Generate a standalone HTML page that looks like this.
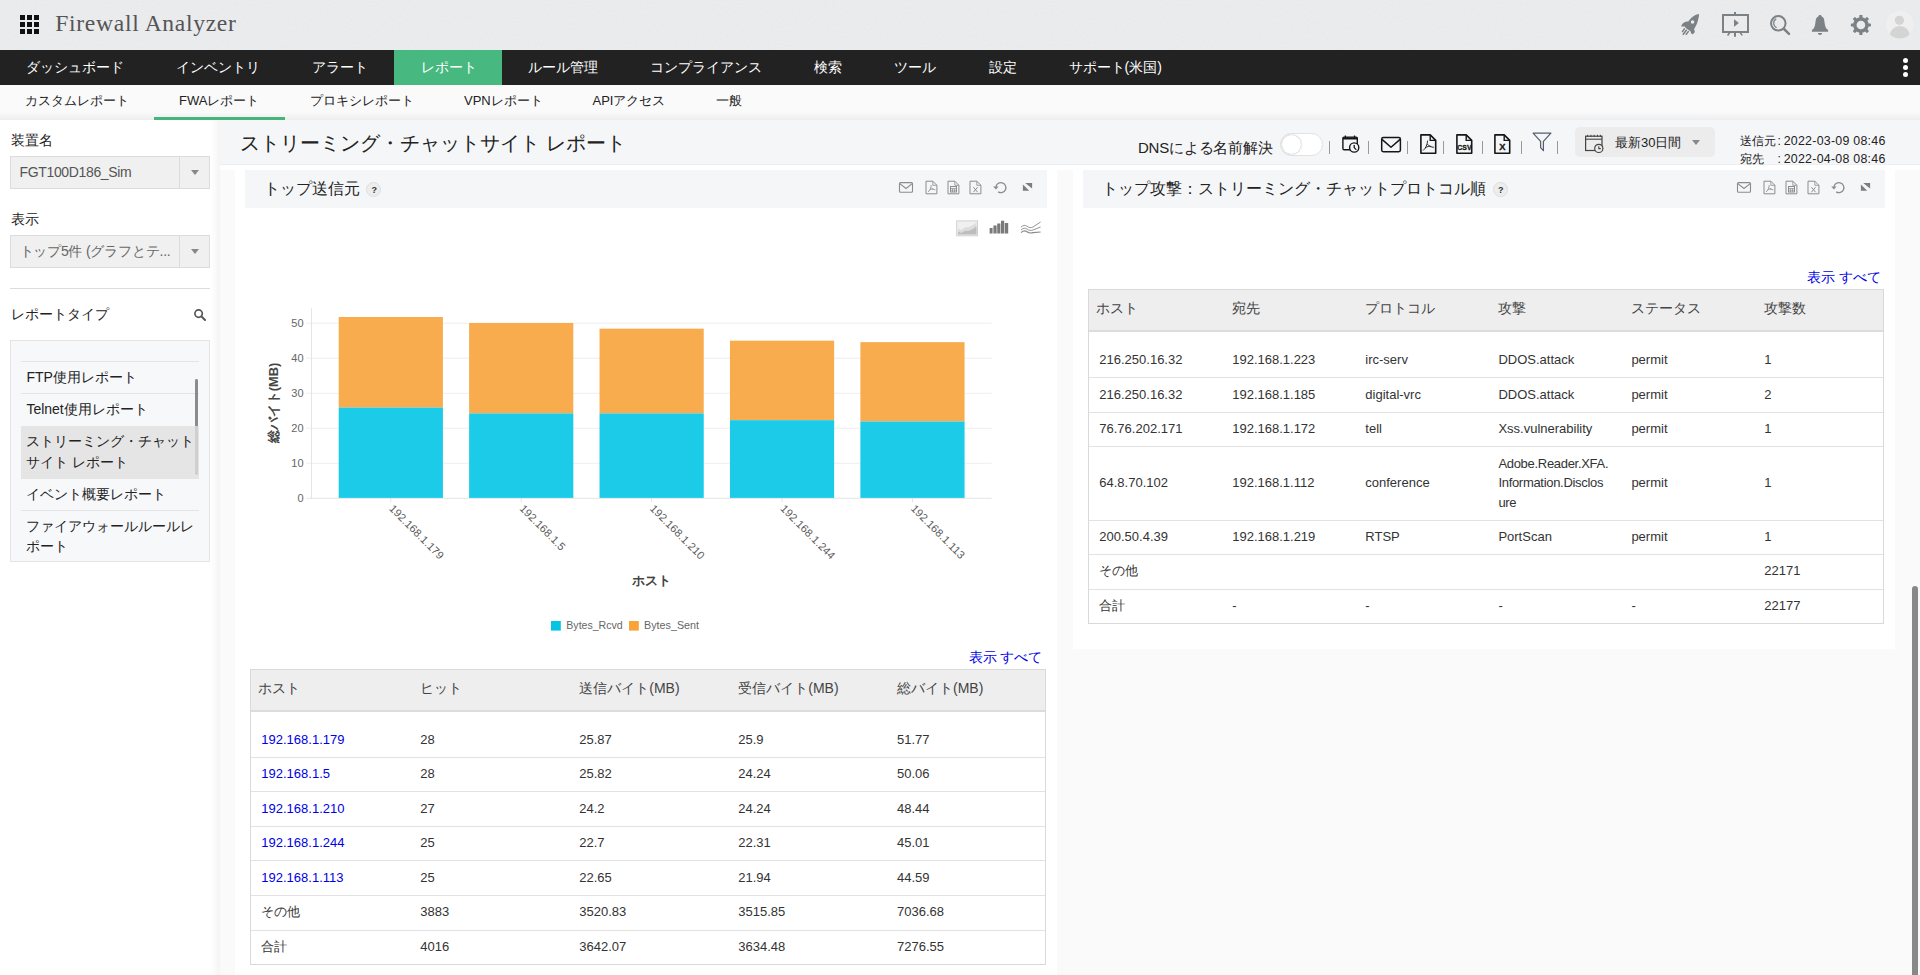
<!DOCTYPE html><html lang="ja"><head><meta charset="utf-8"><title>Firewall Analyzer</title><style>
*{box-sizing:border-box}
html,body{margin:0;padding:0}
body{width:1920px;height:975px;overflow:hidden;position:relative;background:#fafafa;font-family:"Liberation Sans",sans-serif;font-size:14px;color:#222}
.t{position:absolute;white-space:nowrap}
.r{position:absolute}
svg{position:absolute;overflow:visible}
a{color:#0000e6;text-decoration:none}
</style></head><body>
<div class="r" style="left:0px;top:0px;width:1920px;height:50px;background:#e9eaec;"></div>
<svg style="left:0;top:0" width="1920" height="50"><filter id="nz" x="0" y="0" width="100%" height="100%"><feTurbulence type="fractalNoise" baseFrequency="0.55" numOctaves="2" seed="7"/><feColorMatrix type="matrix" values="0 0 0 0 1  0 0 0 0 1  0 0 0 0 1  0.9 0 0 0 -0.33"/></filter><rect width="1920" height="50" filter="url(#nz)" opacity="0.35"/></svg>
<div class="r" style="left:20px;top:15px;width:5px;height:5px;background:#111;"></div>
<div class="r" style="left:20px;top:22px;width:5px;height:5px;background:#111;"></div>
<div class="r" style="left:20px;top:29px;width:5px;height:5px;background:#111;"></div>
<div class="r" style="left:27px;top:15px;width:5px;height:5px;background:#111;"></div>
<div class="r" style="left:27px;top:22px;width:5px;height:5px;background:#111;"></div>
<div class="r" style="left:27px;top:29px;width:5px;height:5px;background:#111;"></div>
<div class="r" style="left:34px;top:15px;width:5px;height:5px;background:#111;"></div>
<div class="r" style="left:34px;top:22px;width:5px;height:5px;background:#111;"></div>
<div class="r" style="left:34px;top:29px;width:5px;height:5px;background:#111;"></div>
<div class="t " style="left:55.3px;top:7.9px;height:30px;line-height:30px;font-size:23.6px;color:#555;font-family:'Liberation Serif',serif;letter-spacing:0.68px">Firewall Analyzer</div>
<svg style="left:1680px;top:13px" width="20" height="23" viewBox="0 0 20 23">
<path d="M19 1.1 C19 3 18.8 4.4 18.4 5.6 C18 7.3 17.6 8.8 17.1 10.3 C16.6 11.8 15.9 13.1 15.1 14.3 L14 16.4 C14.6 17.2 14.9 18.1 14.7 19.1 C14.4 20.2 13.6 20.9 12.7 21.3 C12.1 21.2 11.7 20.9 11.3 20.4 L10.3 18.1 C9.6 17.7 8.9 17.2 8.3 16.7 C7.4 16.2 6.6 15.6 5.9 15 L4.6 13.55 L1.15 13.55 C1.3 12.7 1.7 12 2.2 11.3 C2.8 10.4 3.6 9.8 4.6 9.3 C5.3 8.9 6.1 8.65 6.9 8.6 L8.3 8.6 C8.8 7.6 9.5 6.7 10.3 5.9 C11.2 4.9 12.2 4 13.4 3.2 C14.4 2.4 15.5 1.9 16.7 1.5 C17.5 1.3 18.2 1.1 19 1.1 Z" fill="#7b8185"/>
<circle cx="12.55" cy="8.9" r="1.75" fill="#ebebeb"/>
<path d="M4.7 15.3 L2.2 19.1 M6.7 16.7 L2.9 21.8 M8.7 18.1 L5.8 21.8" stroke="#7b8185" stroke-width="1.5" fill="none"/>
</svg>
<svg style="left:1720px;top:10px" width="32" height="28" viewBox="0 0 32 28">
<rect x="3" y="5" width="25" height="17" fill="none" stroke="#7b8185" stroke-width="2"/>
<path d="M15 2 V5 M15 22.5 V26.8" stroke="#7b8185" stroke-width="2" fill="none"/>
<path d="M9.8 22.6 L7.6 25.4 M20.2 22.6 L22.2 25.4" stroke="#7b8185" stroke-width="1.6" fill="none"/>
<path d="M14 9.2 V16.8 L18.9 13 Z" fill="#7b8185"/>
</svg>
<svg style="left:1768px;top:12px" width="24" height="26" viewBox="0 0 24 26">
<circle cx="10.3" cy="11.3" r="7.25" fill="none" stroke="#7b8185" stroke-width="2"/>
<path d="M16 17 L21 21.9" stroke="#7b8185" stroke-width="2.5" stroke-linecap="round" fill="none"/>
<path d="M8.3 6.9 A4.8 4.8 0 0 0 8.6 15.6" stroke="#7b8185" stroke-width="1.2" fill="none"/>
</svg>
<svg style="left:1810px;top:14px" width="20" height="22" viewBox="0 0 20 22">
<path d="M10 1 C11 1 11.6 1.6 11.7 2.6 C13.6 3.3 14.2 5.2 14.4 7.3 C14.8 11 15.3 13.4 16.6 14.7 L18.1 16.1 V17.8 H1.9 V16.1 L3.4 14.7 C4.7 13.4 5.2 11 5.6 7.3 C5.8 5.2 6.4 3.3 8.3 2.6 C8.4 1.6 9 1 10 1 Z" fill="#7b8185"/>
<path d="M7.9 19 H12.1 A2.1 2.1 0 0 1 7.9 19 Z" fill="#7b8185"/>
</svg>
<svg style="left:1850px;top:14px" width="22" height="22" viewBox="0 0 22 22">
<rect x="9.35" y="1.0" width="3.1" height="4" rx="0.6" transform="rotate(0 10.9 11.0)" fill="#7b8185"/><rect x="9.35" y="1.0" width="3.1" height="4" rx="0.6" transform="rotate(45 10.9 11.0)" fill="#7b8185"/><rect x="9.35" y="1.0" width="3.1" height="4" rx="0.6" transform="rotate(90 10.9 11.0)" fill="#7b8185"/><rect x="9.35" y="1.0" width="3.1" height="4" rx="0.6" transform="rotate(135 10.9 11.0)" fill="#7b8185"/><rect x="9.35" y="1.0" width="3.1" height="4" rx="0.6" transform="rotate(180 10.9 11.0)" fill="#7b8185"/><rect x="9.35" y="1.0" width="3.1" height="4" rx="0.6" transform="rotate(225 10.9 11.0)" fill="#7b8185"/><rect x="9.35" y="1.0" width="3.1" height="4" rx="0.6" transform="rotate(270 10.9 11.0)" fill="#7b8185"/><rect x="9.35" y="1.0" width="3.1" height="4" rx="0.6" transform="rotate(315 10.9 11.0)" fill="#7b8185"/>
<circle cx="10.9" cy="11.0" r="6.1" fill="none" stroke="#7b8185" stroke-width="3.5"/>
</svg>
<svg style="left:1885px;top:10px" width="30" height="30" viewBox="0 0 30 30">
<defs><clipPath id="avc"><circle cx="14.8" cy="14.6" r="13.9"/></clipPath></defs>
<circle cx="14.8" cy="14.6" r="13.9" fill="#efefef"/>
<g clip-path="url(#avc)"><circle cx="14.4" cy="10.3" r="4.6" fill="#d4d4d4"/><ellipse cx="14.8" cy="26.2" rx="10.2" ry="10.2" fill="#d4d4d4"/></g>
</svg>
<div class="r" style="left:0px;top:50px;width:1920px;height:35px;background:#222222;"></div>
<div class="r" style="left:394px;top:50px;width:108px;height:35px;background:#47b980;"></div>
<div class="t " style="left:26px;top:57.1px;height:20px;line-height:20px;font-size:14px;color:#fff;">ダッシュボード</div>
<div class="t " style="left:176px;top:57.1px;height:20px;line-height:20px;font-size:14px;color:#fff;">インベントリ</div>
<div class="t " style="left:311.5px;top:57.1px;height:20px;line-height:20px;font-size:14px;color:#fff;">アラート</div>
<div class="t " style="left:421px;top:57.1px;height:20px;line-height:20px;font-size:14px;color:#fff;">レポート</div>
<div class="t " style="left:527.5px;top:57.1px;height:20px;line-height:20px;font-size:14px;color:#fff;">ルール管理</div>
<div class="t " style="left:650px;top:57.1px;height:20px;line-height:20px;font-size:14px;color:#fff;">コンプライアンス</div>
<div class="t " style="left:814px;top:57.1px;height:20px;line-height:20px;font-size:14px;color:#fff;">検索</div>
<div class="t " style="left:894px;top:57.1px;height:20px;line-height:20px;font-size:14px;color:#fff;">ツール</div>
<div class="t " style="left:988.5px;top:57.1px;height:20px;line-height:20px;font-size:14px;color:#fff;">設定</div>
<div class="t " style="left:1068.5px;top:57.1px;height:20px;line-height:20px;font-size:14px;color:#fff;">サポート(米国)</div>
<div class="r" style="left:1902.7px;top:57.8px;width:5.4px;height:5.4px;border-radius:50%;background:#fff"></div>
<div class="r" style="left:1902.7px;top:64.6px;width:5.4px;height:5.4px;border-radius:50%;background:#fff"></div>
<div class="r" style="left:1902.7px;top:71.5px;width:5.4px;height:5.4px;border-radius:50%;background:#fff"></div>
<div class="r" style="left:0px;top:85px;width:1920px;height:35px;background:#fafafa;"></div>
<div class="r" style="left:0px;top:112px;width:1920px;height:8px;background:linear-gradient(180deg,rgba(0,0,0,0),rgba(0,0,0,.05));"></div>
<div class="t " style="left:25px;top:91.3px;height:20px;line-height:20px;font-size:13px;color:#222;">カスタムレポート</div>
<div class="t " style="left:179px;top:91.3px;height:20px;line-height:20px;font-size:13px;color:#222;">FWAレポート</div>
<div class="t " style="left:310px;top:91.3px;height:20px;line-height:20px;font-size:13px;color:#222;">プロキシレポート</div>
<div class="t " style="left:464px;top:91.3px;height:20px;line-height:20px;font-size:13px;color:#222;">VPNレポート</div>
<div class="t " style="left:592.5px;top:91.3px;height:20px;line-height:20px;font-size:13px;color:#222;">APIアクセス</div>
<div class="t " style="left:716px;top:91.3px;height:20px;line-height:20px;font-size:13px;color:#222;">一般</div>
<div class="r" style="left:154px;top:117px;width:131px;height:3px;background:#45b57c;"></div>
<div class="r" style="left:0px;top:120px;width:219.5px;height:855px;background:#ffffff;"></div>
<div class="r" style="left:211px;top:120px;width:8.5px;height:855px;background:linear-gradient(90deg,rgba(0,0,0,0),rgba(0,0,0,.045));"></div>
<div class="t " style="left:10.5px;top:130.0px;height:20px;line-height:20px;font-size:14px;color:#222;">装置名</div>
<div class="r" style="left:10px;top:156px;width:200px;height:32.5px;background:#f0f0f0;border:1px solid #dcdcdc"></div>
<div class="r" style="left:179px;top:157px;width:1px;height:30.5px;background:#dcdcdc;"></div>
<div class="t " style="left:19.5px;top:161.5px;height:20px;line-height:20px;font-size:14px;color:#555;letter-spacing:-0.35px">FGT100D186_Sim</div>
<div class="r" style="left:191px;top:170px;width:0;height:0;border-left:4px solid transparent;border-right:4px solid transparent;border-top:5px solid #888"></div>
<div class="t " style="left:10.5px;top:209.0px;height:20px;line-height:20px;font-size:14px;color:#222;">表示</div>
<div class="r" style="left:10px;top:235px;width:200px;height:33px;background:#f0f0f0;border:1px solid #dcdcdc"></div>
<div class="r" style="left:179px;top:236px;width:1px;height:31px;background:#dcdcdc;"></div>
<div class="t " style="left:19.5px;top:241.0px;height:20px;line-height:20px;font-size:14px;color:#666;letter-spacing:-0.2px">トップ5件 (グラフとテ...</div>
<div class="r" style="left:191px;top:249px;width:0;height:0;border-left:4px solid transparent;border-right:4px solid transparent;border-top:5px solid #888"></div>
<div class="r" style="left:10px;top:288px;width:200px;height:1px;background:#dddddd;"></div>
<div class="t " style="left:10.5px;top:303.5px;height:20px;line-height:20px;font-size:14px;color:#222;">レポートタイプ</div>
<svg style="left:193px;top:308px" width="14" height="14" viewBox="0 0 14 14"><circle cx="5.6" cy="5.6" r="3.7" fill="none" stroke="#555" stroke-width="1.7"/><path d="M8.4 8.4 L12 12" stroke="#555" stroke-width="2" stroke-linecap="round"/></svg>
<div class="r" style="left:10px;top:340px;width:200px;height:221.5px;background:#f7f8fa;border:1px solid #e4e4e4"></div>
<div class="r" style="left:21px;top:361px;width:178px;height:1px;background:#e4e4e4;"></div>
<div class="r" style="left:21px;top:393px;width:178px;height:1px;background:#e4e4e4;"></div>
<div class="r" style="left:21px;top:425.5px;width:178px;height:53px;background:#e5e5e5;"></div>
<div class="r" style="left:21px;top:510px;width:178px;height:1px;background:#e4e4e4;"></div>
<div class="r" style="left:195.4px;top:378.5px;width:2.8px;height:47px;background:#8c8c8c;border-radius:1.4px 1.4px 0 0"></div>
<div class="r" style="left:195.4px;top:425.5px;width:2.8px;height:49.5px;background:#cfcfcf;border-radius:0 0 1.4px 1.4px"></div>
<div class="t " style="left:26.4px;top:367.0px;height:20px;line-height:20px;font-size:14px;color:#222;">FTP使用レポート</div>
<div class="t " style="left:26.4px;top:398.7px;height:20px;line-height:20px;font-size:14px;color:#222;">Telnet使用レポート</div>
<div class="t " style="left:26.4px;top:430.8px;height:20px;line-height:20px;font-size:14px;color:#222;">ストリーミング・チャット</div>
<div class="t " style="left:26.4px;top:451.5px;height:20px;line-height:20px;font-size:14px;color:#222;">サイト レポート</div>
<div class="t " style="left:26.4px;top:483.6px;height:20px;line-height:20px;font-size:14px;color:#222;">イベント概要レポート</div>
<div class="t " style="left:26.4px;top:516.2px;height:20px;line-height:20px;font-size:14px;color:#222;">ファイアウォールルールレ</div>
<div class="t " style="left:26.4px;top:535.6px;height:20px;line-height:20px;font-size:14px;color:#222;">ポート</div>
<div class="r" style="left:220px;top:120px;width:1700px;height:45px;background:#f5f6f8;"></div>
<div class="r" style="left:220px;top:164px;width:1700px;height:1px;background:#eceef0;"></div>
<div class="r" style="left:220px;top:165px;width:1700px;height:5px;background:#ffffff;"></div>
<div class="t " style="left:240px;top:129.0px;height:28px;line-height:28px;font-size:20px;color:#222;">ストリーミング・チャットサイト レポート</div>
<div class="t " style="left:1138px;top:137.5px;height:20px;line-height:20px;font-size:15px;color:#222;letter-spacing:-0.22px">DNSによる名前解決</div>
<div class="r" style="left:1279.5px;top:132.5px;width:43px;height:23px;background:#ffffff;border:1px solid #e2e2e2;border-radius:12px"></div>
<div class="r" style="left:1281.5px;top:134.5px;width:19px;height:19px;background:#ffffff;border-radius:50%;box-shadow:0 0 2px rgba(0,0,0,.35)"></div>
<div class="r" style="left:1329.2px;top:141px;width:1px;height:12.5px;background:#9a9a9a;"></div>
<div class="r" style="left:1368.2px;top:141px;width:1px;height:12.5px;background:#9a9a9a;"></div>
<div class="r" style="left:1406.9px;top:141px;width:1px;height:12.5px;background:#9a9a9a;"></div>
<div class="r" style="left:1442.8px;top:141px;width:1px;height:12.5px;background:#9a9a9a;"></div>
<div class="r" style="left:1482.0px;top:141px;width:1px;height:12.5px;background:#9a9a9a;"></div>
<div class="r" style="left:1520.5px;top:141px;width:1px;height:12.5px;background:#9a9a9a;"></div>
<div class="r" style="left:1557.2px;top:141px;width:1px;height:12.5px;background:#9a9a9a;"></div>
<div class="r" style="left:1575px;top:127px;width:140px;height:30px;background:#ececec;border-radius:5px"></div>
<svg style="left:1340px;top:133px" width="22" height="22" viewBox="0 0 22 22">
<rect x="2.9" y="4.1" width="14.4" height="12.6" rx="1.2" fill="none" stroke="#161616" stroke-width="1.4"/>
<path d="M2.9 5.4 H17.3" stroke="#161616" stroke-width="2.2" fill="none"/>
<path d="M5.4 2.6 V5 M14.5 2.6 V5" stroke="#161616" stroke-width="1.3" fill="none"/>
<circle cx="14.2" cy="14.5" r="4.6" fill="#f5f6f8" stroke="#161616" stroke-width="1.4"/>
<path d="M14.2 12.3 V14.6 L15.9 16.4" stroke="#161616" stroke-width="1.3" fill="none" stroke-linecap="round"/>
</svg>
<svg style="left:1380px;top:135px" width="22" height="19" viewBox="0 0 22 19">
<rect x="1.7" y="2.6" width="18.7" height="14.1" rx="1.6" fill="none" stroke="#161616" stroke-width="1.5"/>
<path d="M2 4.4 L11 12.3 L20.1 4.4" stroke="#161616" stroke-width="1.5" fill="none" stroke-linejoin="round"/>
</svg>
<svg style="left:1420px;top:134.1px" width="18" height="21" viewBox="0 0 18 21">
<path d="M0.9 0.9 H10.2 L15.7 6.4 V19.2 H0.9 Z" fill="none" stroke="#161616" stroke-width="1.6" stroke-linejoin="round"/>
<path d="M10.2 0.9 V6.4 H15.7" fill="none" stroke="#161616" stroke-width="1.4"/>
<path d="M3 16.5 C5.5 14.5 7.2 11.5 7.6 6.6 M7.5 10.2 C8.8 12.2 11.2 13.2 13.9 13.3 M5.2 14 C7 12.5 9.5 12 11.2 12.3" stroke="#161616" stroke-width="0.9" fill="none"/></svg>
<svg style="left:1455.9px;top:134.1px" width="18" height="21" viewBox="0 0 18 21">
<path d="M0.9 0.9 H10.2 L15.7 6.4 V19.2 H0.9 Z" fill="none" stroke="#161616" stroke-width="1.6" stroke-linejoin="round"/>
<path d="M10.2 0.9 V6.4 H15.7" fill="none" stroke="#161616" stroke-width="1.4"/>
<text x="8.4" y="16.3" font-size="6.9" font-weight="bold" fill="#161616" stroke="#161616" stroke-width="0.3" text-anchor="middle" font-family="'Liberation Sans',sans-serif">CSV</text></svg>
<svg style="left:1494px;top:134.1px" width="18" height="21" viewBox="0 0 18 21">
<path d="M0.9 0.9 H10.2 L15.7 6.4 V19.2 H0.9 Z" fill="none" stroke="#161616" stroke-width="1.6" stroke-linejoin="round"/>
<path d="M10.2 0.9 V6.4 H15.7" fill="none" stroke="#161616" stroke-width="1.4"/>
<text x="8.3" y="16.4" font-size="9.4" stroke="#161616" stroke-width="0.3" font-weight="bold" fill="#161616" text-anchor="middle" font-family="'Liberation Sans',sans-serif">X</text></svg>
<svg style="left:1532px;top:132px" width="20" height="20" viewBox="0 0 20 20">
<path d="M1.1 1.2 H18.9 L11.4 9.4 V18.7 L8.6 15.6 V9.4 Z" fill="none" stroke="#555f70" stroke-width="1.25" stroke-linejoin="round"/>
</svg>
<svg style="left:1584px;top:133px" width="22" height="22" viewBox="0 0 22 22">
<rect x="1.6" y="3.2" width="16.4" height="14.3" fill="none" stroke="#444" stroke-width="1.2"/>
<path d="M1.6 6.2 H18" stroke="#444" stroke-width="1.1" fill="none"/>
<path d="M3.6 1.8 V4 M6.9 1.8 V4 M10.2 1.8 V4 M13.5 1.8 V4 M16.4 1.8 V4" stroke="#444" stroke-width="1" fill="none"/>
<circle cx="14.8" cy="15.4" r="4.1" fill="#ececec" stroke="#444" stroke-width="1.2"/>
<path d="M14.8 13.2 V15.6 H16.8" stroke="#444" stroke-width="1.1" fill="none"/>
</svg>
<div class="t " style="left:1615px;top:132.5px;height:20px;line-height:20px;font-size:13px;color:#222;">最新30日間</div>
<div class="r" style="left:1692.3px;top:140px;width:0;height:0;border-left:4px solid transparent;border-right:4px solid transparent;border-top:5px solid #888"></div>
<div class="t " style="left:1740px;top:132.5px;height:16px;line-height:16px;font-size:12px;color:#222;">送信元</div>
<div class="t " style="left:1777.5px;top:132.5px;height:16px;line-height:16px;font-size:12px;color:#222;">:</div>
<div class="t " style="left:1783.7px;top:132.5px;height:16px;line-height:16px;font-size:12.4px;color:#222;letter-spacing:0.25px">2022-03-09 08:46</div>
<div class="t " style="left:1740px;top:150.5px;height:16px;line-height:16px;font-size:12px;color:#222;">宛先</div>
<div class="t " style="left:1777.5px;top:150.5px;height:16px;line-height:16px;font-size:12px;color:#222;">:</div>
<div class="t " style="left:1783.7px;top:150.5px;height:16px;line-height:16px;font-size:12.4px;color:#222;letter-spacing:0.25px">2022-04-08 08:46</div>
<div class="r" style="left:235px;top:170px;width:822px;height:805px;background:#ffffff;"></div>
<div class="r" style="left:245px;top:170px;width:802px;height:38px;background:#f5f6f8;"></div>
<div class="r" style="left:1073px;top:170px;width:822px;height:478.5px;background:#ffffff;"></div>
<div class="r" style="left:1083px;top:170px;width:802px;height:38px;background:#f5f6f8;"></div>
<div class="t " style="left:264px;top:177.0px;height:24px;line-height:24px;font-size:16px;color:#222;letter-spacing:-0.1px">トップ送信元</div>
<div class="t " style="left:1101.8px;top:177.0px;height:24px;line-height:24px;font-size:16px;color:#222;">トップ攻撃：ストリーミング・チャットプロトコル順</div>
<div class="r" style="left:366.3px;top:182.0px;width:15px;height:15px;border-radius:50%;background:#ededed;border:1px solid #dedede"></div>
<div class="t " style="left:371.5px;top:183.8px;height:12px;line-height:12px;font-size:9px;color:#333;font-weight:bold">?</div>
<div class="r" style="left:1492.7px;top:182.0px;width:15px;height:15px;border-radius:50%;background:#ededed;border:1px solid #dedede"></div>
<div class="t " style="left:1497.9px;top:183.8px;height:12px;line-height:12px;font-size:9px;color:#333;font-weight:bold">?</div>
<svg style="left:898px;top:180px" width="16" height="15" viewBox="0 0 16 15">
<rect x="1.5" y="2.6" width="13" height="9.6" rx="1" fill="none" stroke="#8c8c8c" stroke-width="1.1"/>
<path d="M1.8 3.6 L8 8.5 L14.2 3.6" fill="none" stroke="#8c8c8c" stroke-width="1.1"/></svg>
<svg style="left:924.5px;top:179.5px" width="14" height="15" viewBox="0 0 14 15">
<path d="M1 1.2 H7.8 L11.9 5.3 V13.8 H1 Z" fill="none" stroke="#8c8c8c" stroke-width="1" stroke-linejoin="round"/>
<path d="M7.8 1.2 V5.3 H11.9" fill="none" stroke="#8c8c8c" stroke-width="0.8"/><path d="M3 12 C4.8 10.5 6 8.4 6.2 5 M6.1 7.6 C7 9 8.6 9.7 10.4 9.8 M4.4 10.2 C5.8 9.2 7.3 8.9 8.6 9.1" stroke="#8c8c8c" stroke-width="0.8" fill="none"/></svg>
<svg style="left:946.6px;top:179.5px" width="14" height="15" viewBox="0 0 14 15">
<path d="M1 1.2 H7.8 L11.9 5.3 V13.8 H1 Z" fill="none" stroke="#8c8c8c" stroke-width="1" stroke-linejoin="round"/>
<path d="M7.8 1.2 V5.3 H11.9" fill="none" stroke="#8c8c8c" stroke-width="0.8"/><rect x="3.5" y="6.5" width="6" height="5.5" fill="none" stroke="#8c8c8c" stroke-width="1"/><path d="M3.5 8.5 H9.5 M3.5 10.2 H9.5 M5.5 8.5 V12 M7.5 8.5 V12" stroke="#8c8c8c" stroke-width="0.7" fill="none"/></svg>
<svg style="left:968.5px;top:179.5px" width="14" height="15" viewBox="0 0 14 15">
<path d="M1 1.2 H7.8 L11.9 5.3 V13.8 H1 Z" fill="none" stroke="#8c8c8c" stroke-width="1" stroke-linejoin="round"/>
<path d="M7.8 1.2 V5.3 H11.9" fill="none" stroke="#8c8c8c" stroke-width="0.8"/><path d="M4.4 7.2 L8.6 12.2 M8.6 7.2 L4.4 12.2" stroke="#8c8c8c" stroke-width="1" fill="none"/></svg>
<svg style="left:992px;top:180px" width="16" height="15" viewBox="0 0 16 15">
<path d="M3.9 7.2 A5 5 0 1 1 6.2 11.9" fill="none" stroke="#8c8c8c" stroke-width="1.3"/>
<path d="M1.2 6.4 H6.6 L3.9 9.6 Z" fill="#8c8c8c"/></svg>
<svg style="left:1022px;top:182px" width="11" height="10" viewBox="0 0 11 10">
<path d="M3.2 0.9 H10.1 V6.6 Z" fill="#7d7d7d"/><path d="M0.9 2.6 L7.2 8.8 H0.9 Z" fill="#7d7d7d"/></svg>
<svg style="left:1736px;top:180px" width="16" height="15" viewBox="0 0 16 15">
<rect x="1.5" y="2.6" width="13" height="9.6" rx="1" fill="none" stroke="#8c8c8c" stroke-width="1.1"/>
<path d="M1.8 3.6 L8 8.5 L14.2 3.6" fill="none" stroke="#8c8c8c" stroke-width="1.1"/></svg>
<svg style="left:1762.5px;top:179.5px" width="14" height="15" viewBox="0 0 14 15">
<path d="M1 1.2 H7.8 L11.9 5.3 V13.8 H1 Z" fill="none" stroke="#8c8c8c" stroke-width="1" stroke-linejoin="round"/>
<path d="M7.8 1.2 V5.3 H11.9" fill="none" stroke="#8c8c8c" stroke-width="0.8"/><path d="M3 12 C4.8 10.5 6 8.4 6.2 5 M6.1 7.6 C7 9 8.6 9.7 10.4 9.8 M4.4 10.2 C5.8 9.2 7.3 8.9 8.6 9.1" stroke="#8c8c8c" stroke-width="0.8" fill="none"/></svg>
<svg style="left:1784.6px;top:179.5px" width="14" height="15" viewBox="0 0 14 15">
<path d="M1 1.2 H7.8 L11.9 5.3 V13.8 H1 Z" fill="none" stroke="#8c8c8c" stroke-width="1" stroke-linejoin="round"/>
<path d="M7.8 1.2 V5.3 H11.9" fill="none" stroke="#8c8c8c" stroke-width="0.8"/><rect x="3.5" y="6.5" width="6" height="5.5" fill="none" stroke="#8c8c8c" stroke-width="1"/><path d="M3.5 8.5 H9.5 M3.5 10.2 H9.5 M5.5 8.5 V12 M7.5 8.5 V12" stroke="#8c8c8c" stroke-width="0.7" fill="none"/></svg>
<svg style="left:1806.5px;top:179.5px" width="14" height="15" viewBox="0 0 14 15">
<path d="M1 1.2 H7.8 L11.9 5.3 V13.8 H1 Z" fill="none" stroke="#8c8c8c" stroke-width="1" stroke-linejoin="round"/>
<path d="M7.8 1.2 V5.3 H11.9" fill="none" stroke="#8c8c8c" stroke-width="0.8"/><path d="M4.4 7.2 L8.6 12.2 M8.6 7.2 L4.4 12.2" stroke="#8c8c8c" stroke-width="1" fill="none"/></svg>
<svg style="left:1830px;top:180px" width="16" height="15" viewBox="0 0 16 15">
<path d="M3.9 7.2 A5 5 0 1 1 6.2 11.9" fill="none" stroke="#8c8c8c" stroke-width="1.3"/>
<path d="M1.2 6.4 H6.6 L3.9 9.6 Z" fill="#8c8c8c"/></svg>
<svg style="left:1860px;top:182px" width="11" height="10" viewBox="0 0 11 10">
<path d="M3.2 0.9 H10.1 V6.6 Z" fill="#7d7d7d"/><path d="M0.9 2.6 L7.2 8.8 H0.9 Z" fill="#7d7d7d"/></svg>
<svg style="left:956px;top:219.5px" width="23" height="17" viewBox="0 0 23 17">
<rect x="0.7" y="0.9" width="20.8" height="14.9" fill="#f0f0f0" stroke="#cfcfcf" stroke-width="1"/>
<path d="M2 8.5 L5 10 L9 7.6 L13 7 L17 5 L20.5 2.6 V14.6 H2 Z" fill="#dcdcdc"/>
<path d="M2 11.5 L5 13 L9 11 L13 10.8 L17 9 L20.5 6.5 V14.6 H2 Z" fill="#bdbdbd"/></svg>
<svg style="left:989px;top:220px" width="20" height="14" viewBox="0 0 20 14">
<path d="M0.6 13.6 V8 H3.6 V13.6 Z M4.4 13.6 V5.6 H7.6 V13.6 Z M8.2 13.6 V3.6 H11.4 V13.6 Z M12 13.6 V0.8 H15.2 V13.6 Z M15.8 13.6 V3 H19.2 V13.6 Z" fill="#7a7a7a"/></svg>
<svg style="left:1020px;top:220.5px" width="22" height="13" viewBox="0 0 22 13">
<path d="M1 6.2 C3 4.2 5 3.8 7 5.2 C9 6.8 11 7.2 13 6 L20.6 1" fill="none" stroke="#8a8a8a" stroke-width="0.9"/>
<path d="M1 9 C3 7 5 6.6 7 8 C9 9.6 11 9.8 13 9 L20.6 6" fill="none" stroke="#8a8a8a" stroke-width="0.9"/>
<path d="M1 11.6 C3 9.8 5 9.4 7 10.8 C9 12.2 11 12.3 13 11.6 L20.6 11" fill="none" stroke="#8a8a8a" stroke-width="1.2"/></svg>
<div class="r" style="left:1912px;top:586px;width:6px;height:400px;background:#888888;border-radius:3px"></div>
<svg style="left:0;top:0" width="1920" height="975" viewBox="0 0 1920 975" font-family="'Liberation Sans',sans-serif">
<path d="M306.5 498.30 H991.6" stroke="#e4e4e4" stroke-width="1" fill="none"/>
<path d="M306.5 463.28 H991.6" stroke="#eeeeee" stroke-width="1" fill="none"/>
<path d="M306.5 428.26 H991.6" stroke="#eeeeee" stroke-width="1" fill="none"/>
<path d="M306.5 393.24 H991.6" stroke="#eeeeee" stroke-width="1" fill="none"/>
<path d="M306.5 358.22 H991.6" stroke="#eeeeee" stroke-width="1" fill="none"/>
<path d="M306.5 323.20 H991.6" stroke="#eeeeee" stroke-width="1" fill="none"/>
<path d="M311.5 308.3 V498.8" stroke="#e4e4e4" stroke-width="1" fill="none"/>
<text x="303.6" y="502.20" font-size="11" fill="#666" text-anchor="end">0</text>
<text x="303.6" y="467.18" font-size="11" fill="#666" text-anchor="end">10</text>
<text x="303.6" y="432.16" font-size="11" fill="#666" text-anchor="end">20</text>
<text x="303.6" y="397.14" font-size="11" fill="#666" text-anchor="end">30</text>
<text x="303.6" y="362.12" font-size="11" fill="#666" text-anchor="end">40</text>
<text x="303.6" y="327.10" font-size="11" fill="#666" text-anchor="end">50</text>
<rect x="338.70" y="317.00" width="104.2" height="90.60" fill="#f9ac4e"/>
<rect x="338.70" y="407.60" width="104.2" height="90.30" fill="#1bcbe8"/>
<path d="M390.80 498.3 v4" stroke="#e4e4e4" stroke-width="1"/>
<text transform="translate(388.50 509.2) rotate(45)" font-size="11" fill="#5a5a5a" letter-spacing="0.13">192.168.1.179</text>
<rect x="469.12" y="322.99" width="104.2" height="90.42" fill="#f9ac4e"/>
<rect x="469.12" y="413.41" width="104.2" height="84.49" fill="#1bcbe8"/>
<path d="M521.22 498.3 v4" stroke="#e4e4e4" stroke-width="1"/>
<text transform="translate(518.92 509.2) rotate(45)" font-size="11" fill="#5a5a5a" letter-spacing="0.13">192.168.1.5</text>
<rect x="599.54" y="328.66" width="104.2" height="84.75" fill="#f9ac4e"/>
<rect x="599.54" y="413.41" width="104.2" height="84.49" fill="#1bcbe8"/>
<path d="M651.64 498.3 v4" stroke="#e4e4e4" stroke-width="1"/>
<text transform="translate(649.34 509.2) rotate(45)" font-size="11" fill="#5a5a5a" letter-spacing="0.13">192.168.1.210</text>
<rect x="729.96" y="340.67" width="104.2" height="79.50" fill="#f9ac4e"/>
<rect x="729.96" y="420.17" width="104.2" height="77.73" fill="#1bcbe8"/>
<path d="M782.06 498.3 v4" stroke="#e4e4e4" stroke-width="1"/>
<text transform="translate(779.76 509.2) rotate(45)" font-size="11" fill="#5a5a5a" letter-spacing="0.13">192.168.1.244</text>
<rect x="860.38" y="342.15" width="104.2" height="79.32" fill="#f9ac4e"/>
<rect x="860.38" y="421.47" width="104.2" height="76.43" fill="#1bcbe8"/>
<path d="M912.48 498.3 v4" stroke="#e4e4e4" stroke-width="1"/>
<text transform="translate(910.18 509.2) rotate(45)" font-size="11" fill="#5a5a5a" letter-spacing="0.13">192.168.1.113</text>
<text x="651.5" y="584.6" font-size="13" font-weight="bold" fill="#444" text-anchor="middle">ホスト</text>
<text transform="translate(277.6 403) rotate(-90)" font-size="12.8" font-weight="bold" fill="#444" text-anchor="middle">総バイト(MB)</text>
<rect x="551" y="621" width="9.8" height="9.6" fill="#06c4e3"/>
<text x="566.3" y="629.3" font-size="10.6" fill="#666" textLength="56.4" lengthAdjust="spacingAndGlyphs">Bytes_Rcvd</text>
<rect x="629" y="621" width="9.8" height="9.6" fill="#f9a338"/>
<text x="644" y="629.3" font-size="10.6" fill="#666" textLength="55.1" lengthAdjust="spacingAndGlyphs">Bytes_Sent</text>
</svg>
<div class="t" style="left:968.5px;top:647.0px;height:20px;line-height:20px;font-size:14px;color:#0000e6;">表示 すべて</div>
<div class="t" style="left:1807px;top:267.0px;height:20px;line-height:20px;font-size:14px;color:#0000e6;">表示 すべて</div>
<div class="r" style="left:250px;top:669px;width:796px;height:295.5px;background:#ffffff;border:1px solid #d9d9d9"></div>
<div class="r" style="left:251px;top:670px;width:794px;height:40px;background:#eeeeee;"></div>
<div class="r" style="left:251px;top:709.5px;width:794px;height:2px;background:#dcdcdc;"></div>
<div class="r" style="left:251px;top:756.5px;width:794px;height:1px;background:#e2e2e2;"></div>
<div class="r" style="left:251px;top:791.2px;width:794px;height:1px;background:#e2e2e2;"></div>
<div class="r" style="left:251px;top:825.7px;width:794px;height:1px;background:#e2e2e2;"></div>
<div class="r" style="left:251px;top:860.3px;width:794px;height:1px;background:#e2e2e2;"></div>
<div class="r" style="left:251px;top:894.8px;width:794px;height:1px;background:#e2e2e2;"></div>
<div class="r" style="left:251px;top:929.5px;width:794px;height:1px;background:#e2e2e2;"></div>
<div class="t" style="left:258px;top:678.0px;height:20px;line-height:20px;font-size:14px;color:#444;">ホスト</div>
<div class="t" style="left:420.2px;top:678.0px;height:20px;line-height:20px;font-size:14px;color:#444;">ヒット</div>
<div class="t" style="left:579.3px;top:678.0px;height:20px;line-height:20px;font-size:14px;color:#444;">送信バイト(MB)</div>
<div class="t" style="left:738.3px;top:678.0px;height:20px;line-height:20px;font-size:14px;color:#444;">受信バイト(MB)</div>
<div class="t" style="left:897px;top:678.0px;height:20px;line-height:20px;font-size:14px;color:#444;">総バイト(MB)</div>
<div class="t" style="left:261.3px;top:730.0px;height:20px;line-height:20px;font-size:13px;color:#0000e6;"><a>192.168.1.179</a></div>
<div class="t" style="left:420.2px;top:730.0px;height:20px;line-height:20px;font-size:13px;color:#333;">28</div>
<div class="t" style="left:579.3px;top:730.0px;height:20px;line-height:20px;font-size:13px;color:#333;">25.87</div>
<div class="t" style="left:738.3px;top:730.0px;height:20px;line-height:20px;font-size:13px;color:#333;">25.9</div>
<div class="t" style="left:897px;top:730.0px;height:20px;line-height:20px;font-size:13px;color:#333;">51.77</div>
<div class="t" style="left:261.3px;top:764.4px;height:20px;line-height:20px;font-size:13px;color:#0000e6;"><a>192.168.1.5</a></div>
<div class="t" style="left:420.2px;top:764.4px;height:20px;line-height:20px;font-size:13px;color:#333;">28</div>
<div class="t" style="left:579.3px;top:764.4px;height:20px;line-height:20px;font-size:13px;color:#333;">25.82</div>
<div class="t" style="left:738.3px;top:764.4px;height:20px;line-height:20px;font-size:13px;color:#333;">24.24</div>
<div class="t" style="left:897px;top:764.4px;height:20px;line-height:20px;font-size:13px;color:#333;">50.06</div>
<div class="t" style="left:261.3px;top:799.0px;height:20px;line-height:20px;font-size:13px;color:#0000e6;"><a>192.168.1.210</a></div>
<div class="t" style="left:420.2px;top:799.0px;height:20px;line-height:20px;font-size:13px;color:#333;">27</div>
<div class="t" style="left:579.3px;top:799.0px;height:20px;line-height:20px;font-size:13px;color:#333;">24.2</div>
<div class="t" style="left:738.3px;top:799.0px;height:20px;line-height:20px;font-size:13px;color:#333;">24.24</div>
<div class="t" style="left:897px;top:799.0px;height:20px;line-height:20px;font-size:13px;color:#333;">48.44</div>
<div class="t" style="left:261.3px;top:833.4px;height:20px;line-height:20px;font-size:13px;color:#0000e6;"><a>192.168.1.244</a></div>
<div class="t" style="left:420.2px;top:833.4px;height:20px;line-height:20px;font-size:13px;color:#333;">25</div>
<div class="t" style="left:579.3px;top:833.4px;height:20px;line-height:20px;font-size:13px;color:#333;">22.7</div>
<div class="t" style="left:738.3px;top:833.4px;height:20px;line-height:20px;font-size:13px;color:#333;">22.31</div>
<div class="t" style="left:897px;top:833.4px;height:20px;line-height:20px;font-size:13px;color:#333;">45.01</div>
<div class="t" style="left:261.3px;top:868.0px;height:20px;line-height:20px;font-size:13px;color:#0000e6;"><a>192.168.1.113</a></div>
<div class="t" style="left:420.2px;top:868.0px;height:20px;line-height:20px;font-size:13px;color:#333;">25</div>
<div class="t" style="left:579.3px;top:868.0px;height:20px;line-height:20px;font-size:13px;color:#333;">22.65</div>
<div class="t" style="left:738.3px;top:868.0px;height:20px;line-height:20px;font-size:13px;color:#333;">21.94</div>
<div class="t" style="left:897px;top:868.0px;height:20px;line-height:20px;font-size:13px;color:#333;">44.59</div>
<div class="t" style="left:261.3px;top:902.4px;height:20px;line-height:20px;font-size:13px;color:#333;">その他</div>
<div class="t" style="left:420.2px;top:902.4px;height:20px;line-height:20px;font-size:13px;color:#333;">3883</div>
<div class="t" style="left:579.3px;top:902.4px;height:20px;line-height:20px;font-size:13px;color:#333;">3520.83</div>
<div class="t" style="left:738.3px;top:902.4px;height:20px;line-height:20px;font-size:13px;color:#333;">3515.85</div>
<div class="t" style="left:897px;top:902.4px;height:20px;line-height:20px;font-size:13px;color:#333;">7036.68</div>
<div class="t" style="left:261.3px;top:937.0px;height:20px;line-height:20px;font-size:13px;color:#333;">合計</div>
<div class="t" style="left:420.2px;top:937.0px;height:20px;line-height:20px;font-size:13px;color:#333;">4016</div>
<div class="t" style="left:579.3px;top:937.0px;height:20px;line-height:20px;font-size:13px;color:#333;">3642.07</div>
<div class="t" style="left:738.3px;top:937.0px;height:20px;line-height:20px;font-size:13px;color:#333;">3634.48</div>
<div class="t" style="left:897px;top:937.0px;height:20px;line-height:20px;font-size:13px;color:#333;">7276.55</div>
<div class="r" style="left:1088px;top:289px;width:796px;height:334.8px;background:#ffffff;border:1px solid #d9d9d9"></div>
<div class="r" style="left:1089px;top:290px;width:794px;height:40px;background:#eeeeee;"></div>
<div class="r" style="left:1089px;top:329.5px;width:794px;height:2px;background:#dcdcdc;"></div>
<div class="r" style="left:1089px;top:377.0px;width:794px;height:1px;background:#e2e2e2;"></div>
<div class="r" style="left:1089px;top:411.7px;width:794px;height:1px;background:#e2e2e2;"></div>
<div class="r" style="left:1089px;top:446.0px;width:794px;height:1px;background:#e2e2e2;"></div>
<div class="r" style="left:1089px;top:519.5px;width:794px;height:1px;background:#e2e2e2;"></div>
<div class="r" style="left:1089px;top:553.9px;width:794px;height:1px;background:#e2e2e2;"></div>
<div class="r" style="left:1089px;top:588.6px;width:794px;height:1px;background:#e2e2e2;"></div>
<div class="t" style="left:1095.8px;top:297.6px;height:20px;line-height:20px;font-size:14px;color:#444;">ホスト</div>
<div class="t" style="left:1232.2px;top:297.6px;height:20px;line-height:20px;font-size:14px;color:#444;">宛先</div>
<div class="t" style="left:1365.3px;top:297.6px;height:20px;line-height:20px;font-size:14px;color:#444;">プロトコル</div>
<div class="t" style="left:1498.4px;top:297.6px;height:20px;line-height:20px;font-size:14px;color:#444;">攻撃</div>
<div class="t" style="left:1631.4px;top:297.6px;height:20px;line-height:20px;font-size:14px;color:#444;">ステータス</div>
<div class="t" style="left:1764.3px;top:297.6px;height:20px;line-height:20px;font-size:14px;color:#444;">攻撃数</div>
<div class="t" style="left:1099.3px;top:350.3px;height:20px;line-height:20px;font-size:13px;color:#333;">216.250.16.32</div>
<div class="t" style="left:1232.2px;top:350.3px;height:20px;line-height:20px;font-size:13px;color:#333;">192.168.1.223</div>
<div class="t" style="left:1365.3px;top:350.3px;height:20px;line-height:20px;font-size:13px;color:#333;">irc-serv</div>
<div class="t" style="left:1498.4px;top:350.3px;height:20px;line-height:20px;font-size:13px;color:#333;">DDOS.attack</div>
<div class="t" style="left:1631.4px;top:350.3px;height:20px;line-height:20px;font-size:13px;color:#333;">permit</div>
<div class="t" style="left:1764.3px;top:350.3px;height:20px;line-height:20px;font-size:13px;color:#333;">1</div>
<div class="t" style="left:1099.3px;top:384.6px;height:20px;line-height:20px;font-size:13px;color:#333;">216.250.16.32</div>
<div class="t" style="left:1232.2px;top:384.6px;height:20px;line-height:20px;font-size:13px;color:#333;">192.168.1.185</div>
<div class="t" style="left:1365.3px;top:384.6px;height:20px;line-height:20px;font-size:13px;color:#333;">digital-vrc</div>
<div class="t" style="left:1498.4px;top:384.6px;height:20px;line-height:20px;font-size:13px;color:#333;">DDOS.attack</div>
<div class="t" style="left:1631.4px;top:384.6px;height:20px;line-height:20px;font-size:13px;color:#333;">permit</div>
<div class="t" style="left:1764.3px;top:384.6px;height:20px;line-height:20px;font-size:13px;color:#333;">2</div>
<div class="t" style="left:1099.3px;top:419.3px;height:20px;line-height:20px;font-size:13px;color:#333;">76.76.202.171</div>
<div class="t" style="left:1232.2px;top:419.3px;height:20px;line-height:20px;font-size:13px;color:#333;">192.168.1.172</div>
<div class="t" style="left:1365.3px;top:419.3px;height:20px;line-height:20px;font-size:13px;color:#333;">tell</div>
<div class="t" style="left:1498.4px;top:419.3px;height:20px;line-height:20px;font-size:13px;color:#333;">Xss.vulnerability</div>
<div class="t" style="left:1631.4px;top:419.3px;height:20px;line-height:20px;font-size:13px;color:#333;">permit</div>
<div class="t" style="left:1764.3px;top:419.3px;height:20px;line-height:20px;font-size:13px;color:#333;">1</div>
<div class="t" style="left:1099.3px;top:473.0px;height:20px;line-height:20px;font-size:13px;color:#333;">64.8.70.102</div>
<div class="t" style="left:1232.2px;top:473.0px;height:20px;line-height:20px;font-size:13px;color:#333;">192.168.1.112</div>
<div class="t" style="left:1365.3px;top:473.0px;height:20px;line-height:20px;font-size:13px;color:#333;">conference</div>
<div class="t" style="left:1498.4px;top:453.75px;line-height:19.5px;font-size:13px;color:#333;letter-spacing:-0.3px">Adobe.Reader.XFA.<br>Information.Disclos<br>ure</div>
<div class="t" style="left:1631.4px;top:473.0px;height:20px;line-height:20px;font-size:13px;color:#333;">permit</div>
<div class="t" style="left:1764.3px;top:473.0px;height:20px;line-height:20px;font-size:13px;color:#333;">1</div>
<div class="t" style="left:1099.3px;top:527.0px;height:20px;line-height:20px;font-size:13px;color:#333;">200.50.4.39</div>
<div class="t" style="left:1232.2px;top:527.0px;height:20px;line-height:20px;font-size:13px;color:#333;">192.168.1.219</div>
<div class="t" style="left:1365.3px;top:527.0px;height:20px;line-height:20px;font-size:13px;color:#333;">RTSP</div>
<div class="t" style="left:1498.4px;top:527.0px;height:20px;line-height:20px;font-size:13px;color:#333;">PortScan</div>
<div class="t" style="left:1631.4px;top:527.0px;height:20px;line-height:20px;font-size:13px;color:#333;">permit</div>
<div class="t" style="left:1764.3px;top:527.0px;height:20px;line-height:20px;font-size:13px;color:#333;">1</div>
<div class="t" style="left:1099.3px;top:561.4px;height:20px;line-height:20px;font-size:13px;color:#333;">その他</div>
<div class="t" style="left:1764.3px;top:561.4px;height:20px;line-height:20px;font-size:13px;color:#333;">22171</div>
<div class="t" style="left:1099.3px;top:596.0px;height:20px;line-height:20px;font-size:13px;color:#333;">合計</div>
<div class="t" style="left:1232.2px;top:596.0px;height:20px;line-height:20px;font-size:13px;color:#333;">-</div>
<div class="t" style="left:1365.3px;top:596.0px;height:20px;line-height:20px;font-size:13px;color:#333;">-</div>
<div class="t" style="left:1498.4px;top:596.0px;height:20px;line-height:20px;font-size:13px;color:#333;">-</div>
<div class="t" style="left:1631.4px;top:596.0px;height:20px;line-height:20px;font-size:13px;color:#333;">-</div>
<div class="t" style="left:1764.3px;top:596.0px;height:20px;line-height:20px;font-size:13px;color:#333;">22177</div>
</body></html>
